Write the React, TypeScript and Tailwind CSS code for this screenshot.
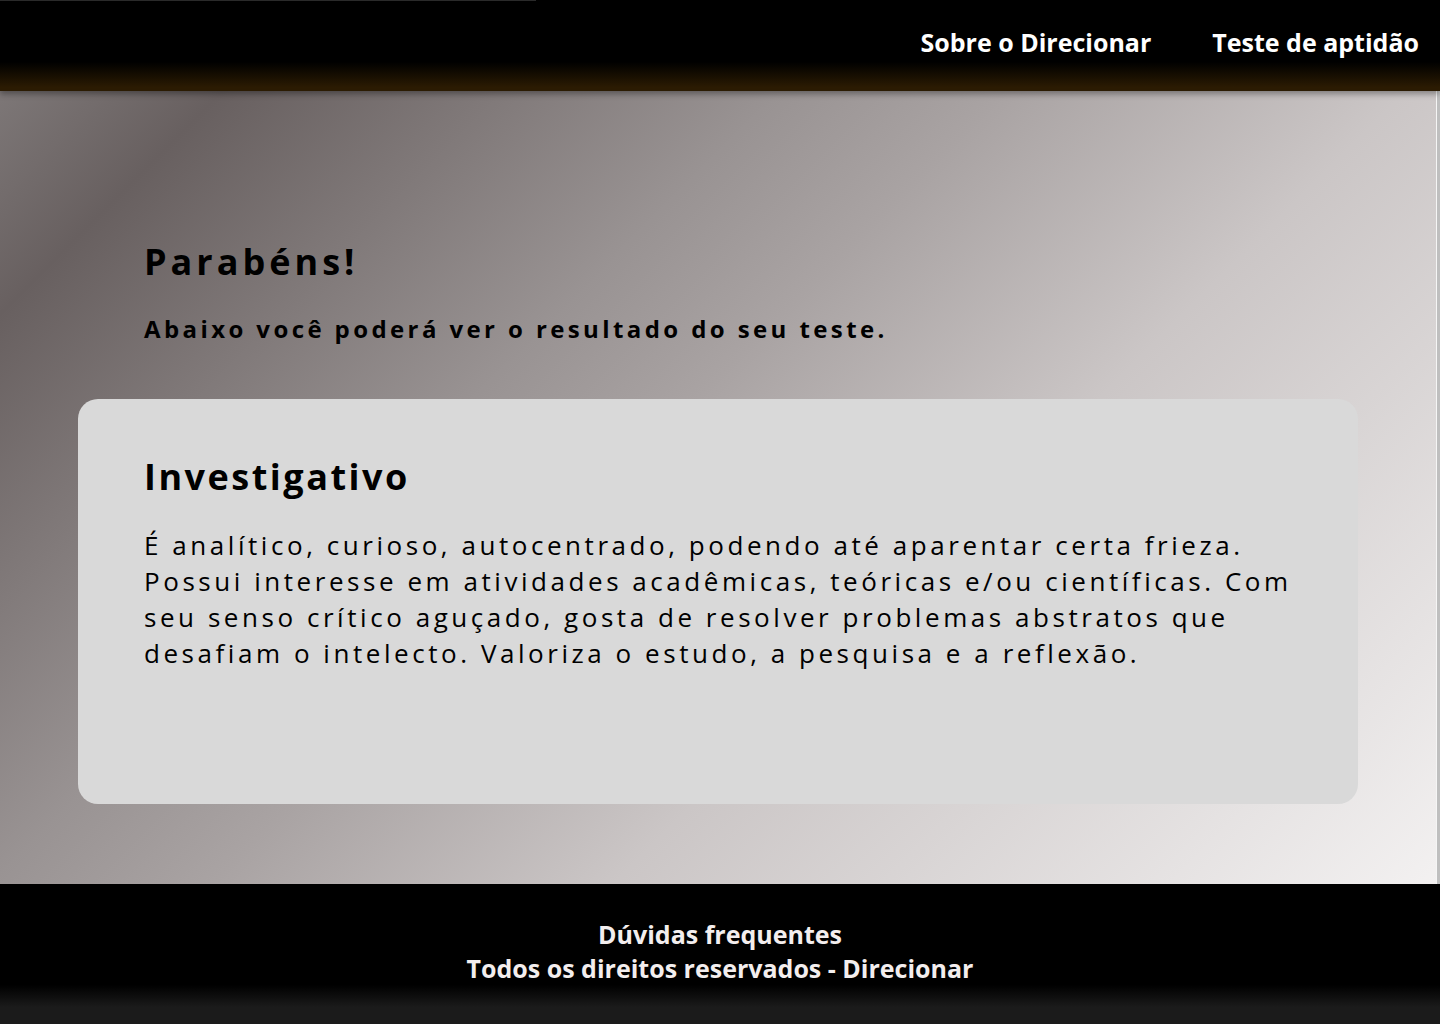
export default function App() {
  const f = { fontFamily: '"Open Sans", "Liberation Sans", sans-serif' };
  return (
    <div className="min-h-[1024px] w-full flex flex-col" style={f}>
      <header className="relative z-10 h-[91px] shrink-0 bg-[linear-gradient(to_bottom,#000_0%,#000_68%,#2b1b02_96%,#2b1b02_100%)] shadow-[0_3px_6px_rgba(0,0,0,0.35)] flex items-center justify-end pr-[21px] gap-[61px]">
        <div className="absolute left-0 top-0 h-px w-[536px] bg-[#2a2a2a]" />
        <a className="text-white text-[25px] font-bold leading-none -mt-[7px]">Sobre o Direcionar</a>
        <a className="text-white text-[25px] font-bold leading-none -mt-[7px]">Teste de aptidão</a>
      </header>
      <main className="h-[793px] shrink-0 bg-[linear-gradient(135deg,#7d7777_0%,#686060_10%,#999393_35%,#a9a3a3_45%,#cbc6c6_63%,#f3f1f1_100%)] shadow-[inset_-3px_0_0_#bfbfbf,inset_-4px_0_0_#f5f5f5] pt-[146px] pl-[78px] pr-[82px]">
        <h1 className="pl-[66px] text-[36px] font-bold leading-[50px] tracking-[4px] text-black">Parabéns!</h1>
        <p className="pl-[66px] mt-[26px] text-[24px] font-bold leading-[32px] tracking-[3.4px] text-black">Abaixo você poderá ver o resultado do seu teste.</p>
        <section className="mt-[54px] h-[405px] rounded-[20px] bg-[#d9d9d9] pl-[66px] pr-[50px] pt-[53px]">
          <h2 className="text-[36px] font-bold leading-[50px] tracking-[2.5px] text-black">Investigativo</h2>
          <p className="mt-[25px] text-[26px] font-normal leading-[36px] tracking-[3.55px] text-black">
            É analítico, curioso, autocentrado, podendo até aparentar certa frieza. Possui interesse em atividades acadêmicas, teóricas e/ou científicas. Com seu senso crítico aguçado, gosta de resolver problemas abstratos que desafiam o intelecto. Valoriza o estudo, a pesquisa e a reflexão.
          </p>
        </section>
      </main>
      <footer className="h-[140px] shrink-0 bg-[linear-gradient(to_bottom,#000_0%,#000_72%,#1b1b1b_88%,#1b1b1b_100%)] flex flex-col items-center pt-[33px]">
        <span className="text-[#f3eeee] text-[25px] font-bold leading-[34px]">Dúvidas frequentes</span>
        <span className="text-[#f3eeee] text-[25px] font-bold leading-[34px]">Todos os direitos reservados - Direcionar</span>
      </footer>
    </div>
  );
}
